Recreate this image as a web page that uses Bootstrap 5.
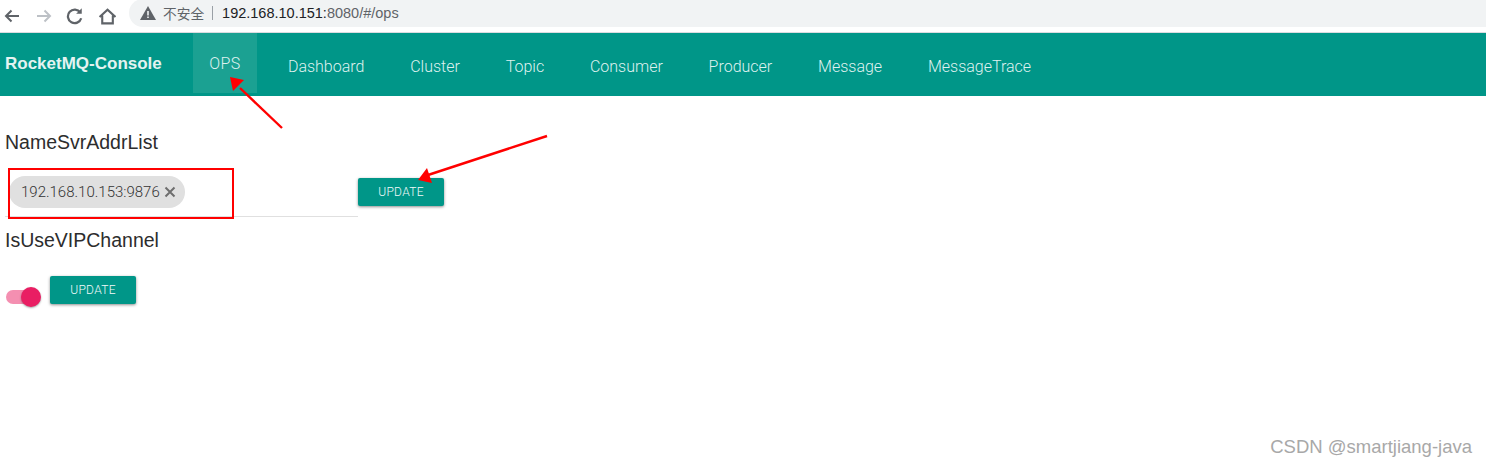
<!DOCTYPE html>
<html lang="en">

<head>
  <meta charset="UTF-8">
  <title>RocketMQ-Console</title>
  <meta name="viewport" content="width=device-width, initial-scale=1">
  <link href="https://cdn.jsdelivr.net/npm/bootstrap@5.3.0/dist/css/bootstrap.min.css" rel="stylesheet">
  <style>
    html, body { height: 100%; }
    body { position: relative; overflow: hidden; background: #fff; font-family: Roboto, "Liberation Sans", sans-serif; color: #333; }
    .chrome-bar { height: 33px; border-bottom: 1px solid #dadce0; padding-left: 3px; background: #fff; }
    .chrome-btn { width: 18px; height: 18px; margin-right: 13px; flex: none; }
    .btn-back { margin-right: 14px; }
    .btn-reload { margin-right: 14px; }
    .btn-home { margin-right: 13px; margin-left: 0; }
    .addr-box { width: 1360px; height: 28px; margin-top: -6px; padding: 0 0 0 11px; background: #f1f3f4; border-radius: 14px 0 0 14px; font: 14.5px "Liberation Sans", "Noto Sans CJK SC", sans-serif; color: #5f6368; }
    .addr-warn { margin-right: 7px; }
    .addr-sep { width: 1px; height: 14px; background: #9aa0a6; margin: 0 9px 0 8px; }
    .addr-host { color: #202124; }
    .addr-cjk { font-size: 13.7px; }
    .mq-nav { height: 63px; background: #009688; padding: 0; align-items: flex-start; }
    .mq-brand { font: 700 17px "Liberation Sans", sans-serif; color: #e4f3f1; padding: 21px 0 0 5px; width: 193px; white-space: nowrap; }
    .mq-link { display: block; height: 60px; padding: 24px 22.900px 0; font-weight: 300; font-size: 16px; line-height: 19px; color: #dff1ef; text-decoration: none; }
    .mq-link.is-on { background: #1ba192; width: 64px; padding: 21px 0 0; text-align: center; margin-right: 8px; letter-spacing: .4px; }
    .mq-link:hover { color: #fff; }
    .ops-body { padding: 35px 5px 0; }
    .ops-title { font: 19.500px/22px "Liberation Sans", sans-serif; color: #2d2d2d; margin: 0; }
    .addr-row { margin-top: 15px; }
    .chip-field { width: 353px; height: 49px; flex: none; border-bottom: 1px solid #e0e0e0; padding: 8px 0 0 4px; }
    .mq-chip { height: 32px; padding: 0 9px 0 12px; border-radius: 16px; background: #e0e0e0; font-size: 15px; font-weight: 300; color: #333; width: 176px; white-space: nowrap; }
    .mq-chip svg { margin-left: 3px; flex: none; }
    .mq-btn { width: 86px; height: 28px; padding: 0; border: 0; border-radius: 2px; background: #009688; color: #f2faf9; font-size: 12px; font-weight: 300; letter-spacing: .3px; box-shadow: 0 1px 3px rgba(0, 0, 0, .45); }
    .row-btn { margin-top: 10px; }
    .vip-title { margin-top: 12px; }
    .vip-row { margin-top: 25px; }
    .mq-switch { position: relative; width: 36px; height: 32px; margin-right: 9px; }
    .mq-track { position: absolute; left: 1px; top: 14px; width: 30px; height: 14px; border-radius: 7px; background: #f48fb1; }
    .mq-thumb { position: absolute; left: 16px; top: 11px; width: 20px; height: 20px; border-radius: 50%; background: #e91e63; box-shadow: 0 1px 2px rgba(0, 0, 0, .35); }
    .mark-layer { position: absolute; left: 0; top: 0; pointer-events: none; }
    .red-box { position: absolute; left: 8px; top: 168px; width: 226px; height: 51px; border: 2px solid #f00; }
    .water-mark { position: absolute; right: 14px; bottom: 6px; font: 18.500px "Liberation Sans", sans-serif; color: #a8a8a8; }
  </style>
</head>

<body>

  <!-- browser toolbar -->
  <div class="chrome-bar d-flex align-items-center">
    <svg class="chrome-btn btn-back" viewBox="0 0 18 18" fill="none" stroke="#5f6368" stroke-width="2"><path d="M16 9H3M8.500 3.500 3 9l5.500 5.500"/></svg>
    <svg class="chrome-btn" viewBox="0 0 18 18" fill="none" stroke="#bdc1c6" stroke-width="2"><path d="M2 9h13M9.500 3.500 15 9l-5.500 5.500"/></svg>
    <svg class="chrome-btn btn-reload" viewBox="1 1 16 16" fill="none" stroke="#5f6368" stroke-width="2"><path d="M14.500 11a6 6 0 1 1-.8-5"/><path d="M15 2v5h-5" fill="#5f6368" stroke="none"/></svg>
    <svg class="chrome-btn btn-home" viewBox="0 0 17 17" fill="none" stroke="#5f6368" stroke-width="2"><path d="M1.500 9.500 9 2.500l7.500 7M4 8v7.500h10V8"/></svg>
    <div class="addr-box d-flex align-items-center">
      <svg class="addr-warn" width="16" height="14" viewBox="0 0 16 14"><path d="M8 0 16 14H0z" fill="#5f6368"/><path d="M7.200 5h1.600v4.500H7.200zM7.200 10.500h1.600V12H7.200z" fill="#f1f3f4"/></svg>
      <span class="addr-cjk">不安全</span>
      <span class="addr-sep"></span>
      <span class="addr-host">192.168.10.151:</span><span>8080/#/ops</span>
    </div>
  </div>

  <nav class="navbar mq-nav flex-nowrap justify-content-start">
    <span class="mq-brand">RocketMQ-Console</span>
    <a class="mq-link is-on" href="#">OPS</a>
    <a class="mq-link" href="#">Dashboard</a>
    <a class="mq-link" href="#">Cluster</a>
    <a class="mq-link" href="#">Topic</a>
    <a class="mq-link" href="#">Consumer</a>
    <a class="mq-link" href="#">Producer</a>
    <a class="mq-link" href="#">Message</a>
    <a class="mq-link" href="#">MessageTrace</a>
  </nav>

  <main class="ops-body">
    <h5 class="ops-title">NameSvrAddrList</h5>
    <div class="addr-row d-flex align-items-start">
      <div class="chip-field">
        <span class="mq-chip d-inline-flex align-items-center">192.168.10.153:9876
          <svg width="14" height="14" viewBox="0 0 14 14" fill="none" stroke="#6e6e6e" stroke-width="2"><path d="M2.500 2.500l9 9M11.500 2.500l-9 9"/></svg>
        </span>
      </div>
      <button class="mq-btn row-btn" type="button">UPDATE</button>
    </div>

    <h5 class="ops-title vip-title">IsUseVIPChannel</h5>
    <div class="vip-row d-flex align-items-start">
      <div class="mq-switch"><span class="mq-track"></span><span class="mq-thumb"></span></div>
      <button class="mq-btn" type="button">UPDATE</button>
    </div>
  </main>

  <!-- red annotations drawn over the shot -->
  <div class="red-box"></div>
  <svg class="mark-layer" width="1486" height="464" fill="#f00" stroke="none">
    <path d="M282 128 240 88" stroke="#f00" stroke-width="2.400"/>
    <path d="M230 77 244 80 233 91z"/>
    <path d="M547 136 428 175" stroke="#f00" stroke-width="2.400"/>
    <path d="M418 180 427 168 432 183z"/>
  </svg>

  <div class="water-mark">CSDN @smartjiang-java</div>

</body>

</html>
